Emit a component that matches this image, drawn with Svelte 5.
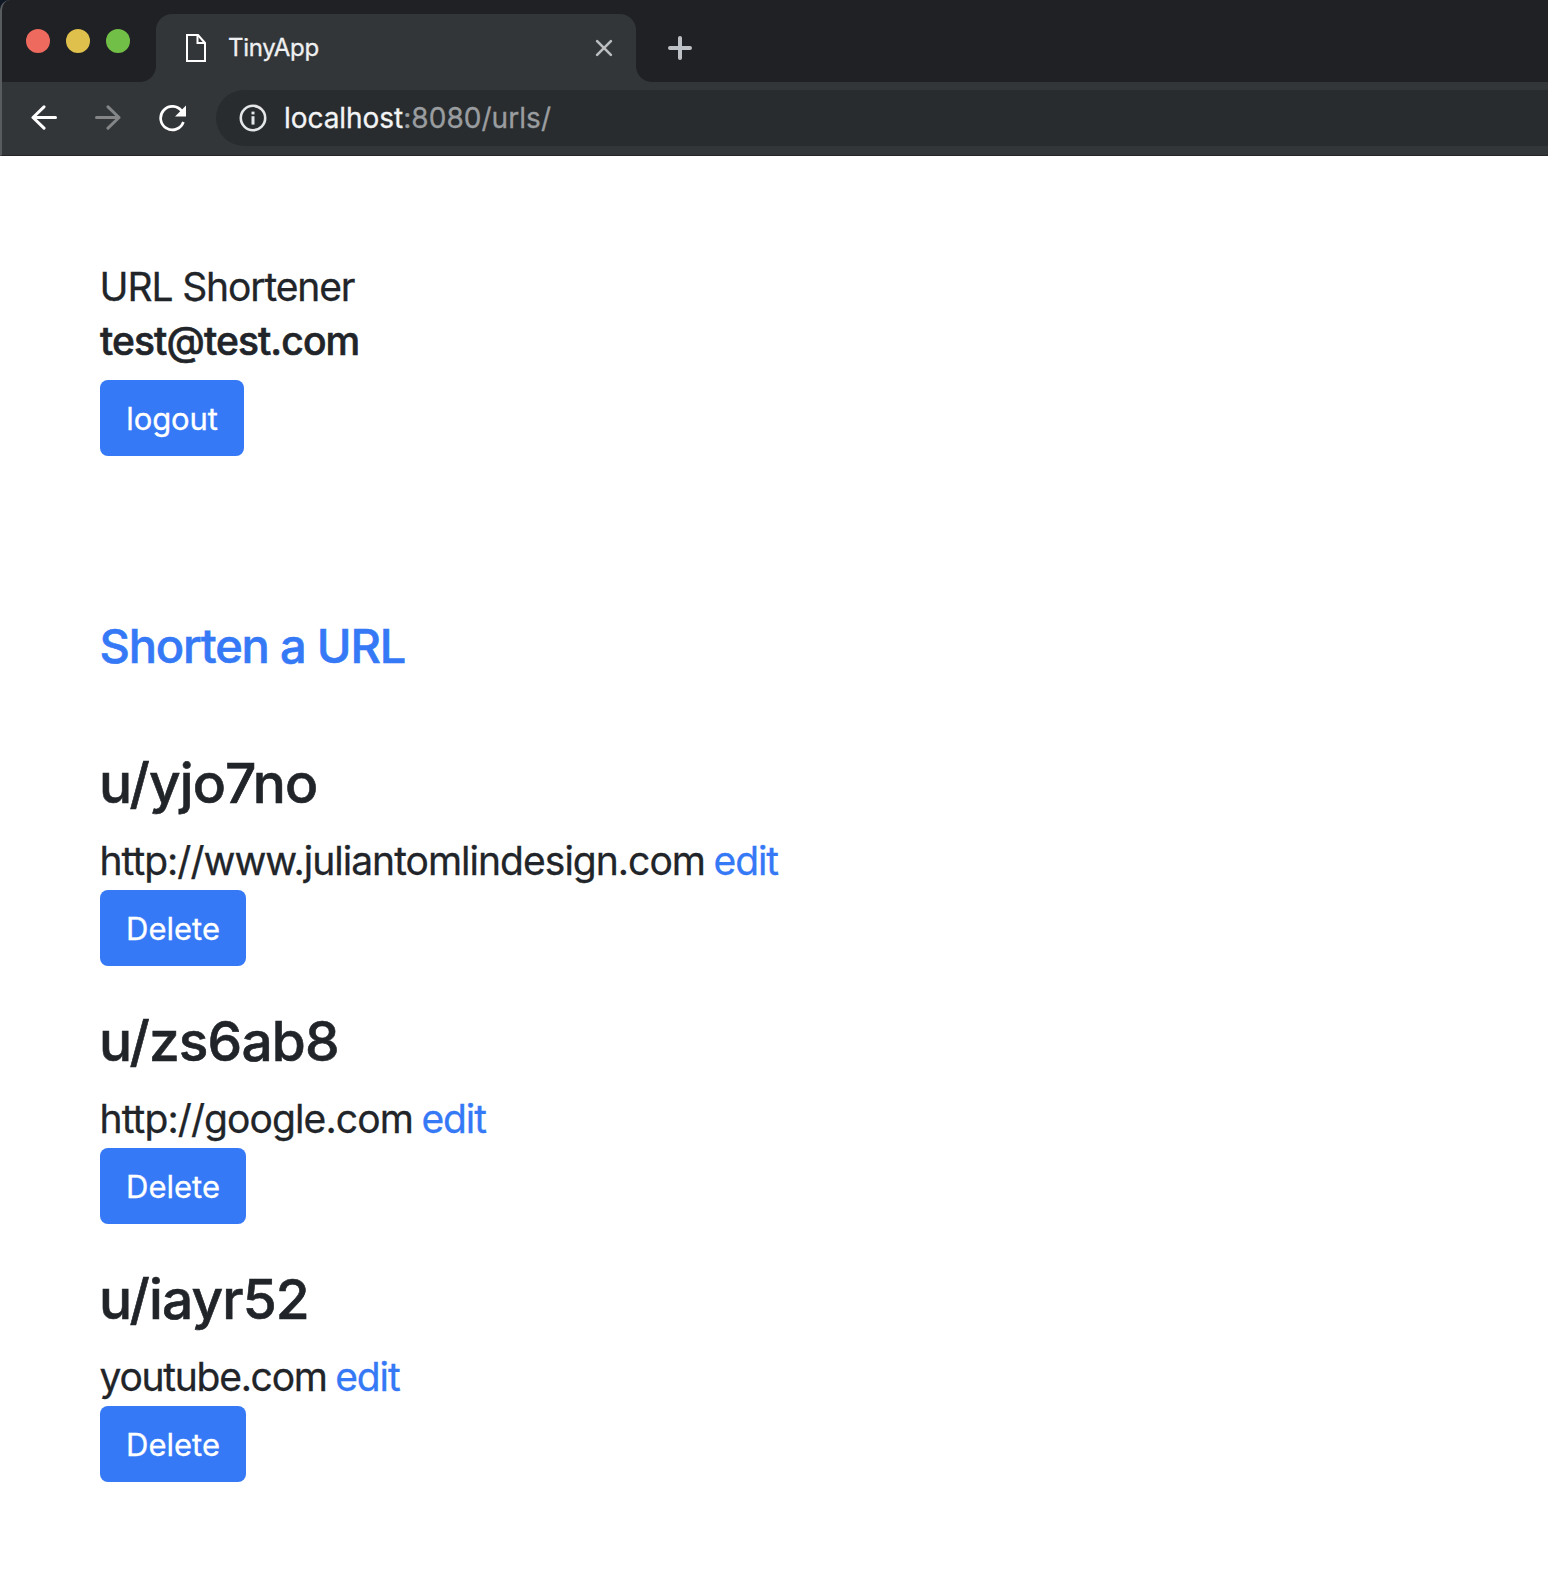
<script lang="ts">
  const urls = [
    { id: 'yjo7no', target: 'http://www.juliantomlindesign.com', fit: 'long' },
    { id: 'zs6ab8', target: 'http://google.com', fit: 'medium' },
    { id: 'iayr52', target: 'youtube.com', fit: 'short' },
  ];
</script>

<div class="window">
  <header class="chrome">
    <div class="tabstrip">
      <div class="lights">
        <span class="light red"></span>
        <span class="light yellow"></span>
        <span class="light green"></span>
      </div>
      <div class="tab">
        <svg class="file" width="20" height="28" viewBox="0 0 20 28" fill="none" stroke="#fff" stroke-width="2">
          <path d="M1 1H12L19 9V27H1Z" />
          <path d="M11.5 1V9H19" />
        </svg>
        <span class="tab-title">TinyApp</span>
        <svg class="close" width="18" height="18" viewBox="0 0 18 18" stroke="#bbbdbf" stroke-width="2.6" stroke-linecap="round">
          <path d="M2.1 2.1L15.9 15.9M15.9 2.1L2.1 15.9" />
        </svg>
      </div>
      <svg class="plus" width="24" height="24" viewBox="0 0 24 24" stroke="#bdc1c6" stroke-width="4" stroke-linecap="round">
        <path d="M12 2V22M2 12H22" />
      </svg>
    </div>
    <div class="toolbar">
      <svg class="arrow" width="26" height="26" viewBox="0 0 26 26" fill="none" stroke="#fff" stroke-width="3" stroke-linecap="round" stroke-linejoin="round">
        <path d="M24.5 12.5H2M13 1.8L2 12.5L13 23.2" />
      </svg>
      <svg class="arrow forward" width="26" height="26" viewBox="0 0 26 26" fill="none" stroke="#838587" stroke-width="3" stroke-linecap="round" stroke-linejoin="round">
        <path d="M1.5 12.5H24M13 1.8L24 12.5L13 23.2" />
      </svg>
      <svg class="reload" width="28" height="27" viewBox="0 0 28 27" fill="none">
        <path d="M22.8 6.2A11.7 11.7 0 1 0 24.4 17" stroke="#fff" stroke-width="2.7" />
        <path d="M27 0.5V11.5H16Z" fill="#fff" />
      </svg>
      <div class="omnibox">
        <svg width="28" height="28" viewBox="0 0 28 28" fill="none" stroke="#e4e6e8">
          <circle cx="14" cy="14" r="12.2" stroke-width="2.6" />
          <path d="M14 12.2V20.6" stroke-width="3" />
          <path d="M14 7.6V10.4" stroke-width="3" />
        </svg>
        <span class="address"><span class="host">localhost</span><span class="path">:8080/urls/</span></span>
      </div>
    </div>
  </header>

  <main>
    <div class="brand">URL Shortener</div>
    <h5>test@test.com</h5>
    <button class="logout">logout</button>

    <h4><a href="#new">Shorten a URL</a></h4>

    {#each urls as url (url.id)}
      <section>
        <h3>u/{url.id}</h3>
        <div class="link-row">
          <span class={url.fit}>{url.target}</span>
          <a href="#{url.id}">edit</a>
        </div>
        <button>Delete</button>
      </section>
    {/each}
  </main>
</div>

<style>
  :global(body) {
    background: #fff;
  }

  .window {
    min-height: 1590px;
    overflow: hidden;
    font-family: Inter, 'Liberation Sans', sans-serif;
    color: #212529;
    -webkit-text-stroke: 0.3px currentColor;
  }

  svg {
    display: block;
    flex: none;
  }

  .chrome {
    box-sizing: border-box;
    height: 156px;
    border-left: 2px solid #595c5e;
    border-bottom: 1px solid #26262a;
    border-top-left-radius: 10px;
    background: #202124;
    box-shadow: 0 0 0 10px #101725;
    clip-path: inset(0);
  }

  .tabstrip {
    display: flex;
    align-items: flex-end;
    height: 82px;
  }

  .lights {
    display: flex;
    gap: 16px;
    margin-left: 24px;
    margin-bottom: 29px;
  }

  .light {
    width: 24px;
    height: 24px;
    border-radius: 50%;
  }

  .red { background: #ee695e; }
  .yellow { background: #e0c04c; }
  .green { background: #72bf47; }

  .tab {
    position: relative;
    display: flex;
    align-items: center;
    box-sizing: border-box;
    width: 480px;
    height: 68px;
    margin-left: 26px;
    padding: 0 23px 0 30px;
    border-radius: 16px 16px 0 0;
    background: #333639;
  }

  /* concave feet joining the tab to the toolbar */
  .tab::before,
  .tab::after {
    content: '';
    position: absolute;
    bottom: 0;
    width: 16px;
    height: 16px;
  }

  .tab::before {
    left: -16px;
    background: radial-gradient(circle at 0 0, transparent 15.5px, #333639 16.5px);
  }

  .tab::after {
    right: -16px;
    background: radial-gradient(circle at 100% 0, transparent 15.5px, #333639 16.5px);
  }

  .tab-title {
    margin-left: 22px;
    font-size: 24px;
    line-height: 30px;
    letter-spacing: -0.3px;
    color: #eff0f1;
  }

  .close {
    margin-left: auto;
  }

  .plus {
    margin-left: 32px;
    margin-bottom: 22px;
  }

  .toolbar {
    display: flex;
    align-items: center;
    box-sizing: border-box;
    height: 73px;
    padding: 8px 0 9px 29px;
    background: #333639;
  }

  .forward {
    margin-left: 38px;
  }

  .reload {
    margin-left: 38px;
  }

  .omnibox {
    display: flex;
    flex: 1;
    align-items: center;
    box-sizing: border-box;
    height: 56px;
    margin-left: 29px;
    padding-left: 22.5px;
    border-radius: 28px 0 0 28px;
    background: #282c2e;
  }

  .address {
    margin-left: 17.5px;
    font-size: 28px;
    line-height: 34px;
    color: #9a9da0;
  }

  .host {
    letter-spacing: -0.05px;
    color: #f3f4f5;
  }

  .path {
    letter-spacing: 0.05px;
  }

  main {
    padding: 101px 100px 0;
  }

  .brand {
    margin-left: -0.5px;
    font-size: 39px;
    line-height: 60px;
    letter-spacing: -1.12px;
  }

  h3,
  h4,
  h5 {
    margin: 0;
    font-weight: 500;
    -webkit-text-stroke-width: 0.6px;
  }

  h5 {
    margin-bottom: 15px;
    font-size: 39px;
    line-height: 48px;
    letter-spacing: -0.9px;
  }

  h4 {
    margin: 161px 0 74px -0.5px;
    font-size: 47px;
    line-height: 58px;
    letter-spacing: -1.18px;
  }

  h3 {
    margin: 0 0 14px -1px;
    font-size: 55px;
    line-height: 68px;
    letter-spacing: -0.84px;
  }

  a {
    color: #3579f6;
    text-decoration: none;
  }

  section {
    margin-bottom: 41px;
  }

  .link-row {
    display: flex;
    gap: 8.5px;
    margin-left: -0.5px;
    margin-bottom: -1px;
    font-size: 39px;
    line-height: 60px;
  }

  .link-row a {
    letter-spacing: -1.1px;
  }

  .long { letter-spacing: -0.98px; }
  .medium { letter-spacing: -0.9px; }
  .short { letter-spacing: -1.27px; }

  button {
    display: block;
    box-sizing: border-box;
    width: 146px;
    height: 76px;
    padding: 2px 0 0;
    border: 0;
    border-radius: 8px;
    background: #3579f6;
    font: 400 31px/48px Inter, 'Liberation Sans', sans-serif;
    color: #fff;
  }

  .logout {
    width: 144px;
    letter-spacing: -0.15px;
  }
</style>
